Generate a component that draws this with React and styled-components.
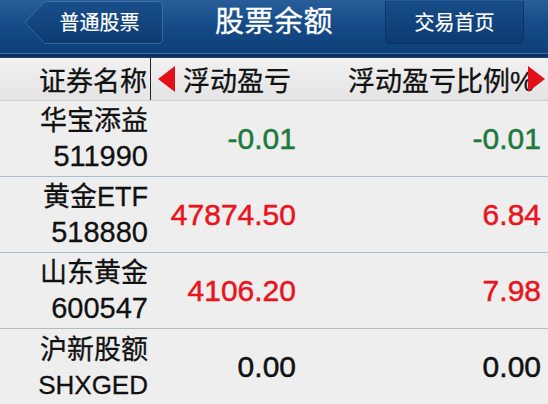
import React from 'react';
import styled, { createGlobalStyle } from 'styled-components';

const GlobalStyle = createGlobalStyle`
  html, body {
    margin: 0;
    padding: 0;
    background: #eeeeee;
  }
  body {
    width: 548px;
    height: 404px;
    overflow: hidden;
    font-family: "Liberation Sans", "Noto Sans CJK SC", sans-serif;
  }
`;

const Page = styled.div`
  width: 548px;
  height: 404px;
  display: flex;
  flex-direction: column;
  background: #eeeeee;
`;

const NavBar = styled.div`
  height: 53px;
  flex-shrink: 0;
  display: grid;
  grid-template-columns: 1fr auto 1fr;
  align-items: start;
  background: linear-gradient(#285d98, #164c89 45%, #0e3f78);
  border-bottom: 1px solid #3d6fa6;
  box-shadow: 0 1px 0 #0b2f5c, 0 2px 0 #0b2f5c, 0 3px 0 #0d3566, 0 4px 0 #1b3f66;
  margin-bottom: 4px;
  color: #fff;
`;

const Title = styled.div`
  font-size: 29px;
  line-height: 44px;
  letter-spacing: 0.5px;
  -webkit-text-stroke: 0.3px #fff;
`;

const NavButton = styled.button`
  position: relative;
  margin-top: 1px;
  height: 43px;
  width: 139px;
  border: none;
  padding: 0;
  background: none;
  color: #fff;
  font-family: inherit;
  font-size: 20px;
  cursor: pointer;
  justify-self: ${p => (p.$right ? 'end' : 'start')};
  margin-left: ${p => (p.$right ? '0' : '24px')};
  margin-right: ${p => (p.$right ? '24px' : '0')};

  svg {
    position: absolute;
    inset: 0;
  }

  span {
    position: relative;
    display: block;
    padding-left: ${p => (p.$right ? '0' : '12px')};
    line-height: 40px;
    -webkit-text-stroke: 0.2px #fff;
  }
`;

const BackShape = () => (
  <svg width="139" height="43" viewBox="0 0 139 43">
    <defs>
      <linearGradient id="bg1" x1="0" y1="0" x2="0" y2="1">
        <stop offset="0" stopColor="#1a4f8b" />
        <stop offset="1" stopColor="#0c3a73" />
      </linearGradient>
    </defs>
    <path
      d="M21 0.5 H134 Q138.5 0.5 138.5 5 V38 Q138.5 42.5 134 42.5 H21 L0.8 21.5 Z"
      fill="url(#bg1)"
      stroke="#5a86b8"
      strokeOpacity="0.55"
      strokeWidth="1"
    />
  </svg>
);

const HomeShape = () => (
  <svg width="139" height="43" viewBox="0 0 139 43">
    <defs>
      <linearGradient id="bg2" x1="0" y1="0" x2="0" y2="1">
        <stop offset="0" stopColor="#1a4f8b" />
        <stop offset="1" stopColor="#0c3a73" />
      </linearGradient>
    </defs>
    <rect
      x="0.5"
      y="-4"
      width="138"
      height="46.5"
      rx="5"
      fill="url(#bg2)"
      stroke="#0a2e5c"
      strokeOpacity="0.8"
      strokeWidth="1"
    />
  </svg>
);

const HeaderRow = styled.div`
  height: 42px;
  flex-shrink: 0;
  display: grid;
  grid-template-columns: 151px 146px 1fr;
  align-items: center;
  background: linear-gradient(#f1f1f1, #e4e4e4);
  border-bottom: 1px solid #c9d0d8;
  color: #111;
  font-size: 27px;
  overflow: hidden;
  -webkit-text-stroke: 0.3px #111;
`;

const HeadName = styled.div`
  height: 100%;
  display: flex;
  align-items: center;
  justify-content: flex-end;
  padding-right: 3px;
  border-right: 1.5px solid #222;
  box-sizing: border-box;
`;

const HeadCell = styled.div`
  display: flex;
  align-items: center;
  justify-content: ${p => (p.$end ? 'flex-end' : 'flex-start')};
  white-space: nowrap;
  gap: ${p => (p.$end ? '0' : '8px')};
  padding-left: ${p => (p.$end ? '0' : '7px')};
  padding-right: ${p => (p.$end ? '3px' : '0')};
`;

const Arrow = styled.span`
  width: 0;
  height: 0;
  flex-shrink: 0;
  border-top: 13px solid transparent;
  border-bottom: 13px solid transparent;
  -webkit-text-stroke: 0;
  ${p =>
    p.$dir === 'left'
      ? 'border-right: 17px solid #e3101a;'
      : 'border-left: 17px solid #e3101a; margin-left: -6px;'}
`;

const Row = styled.div`
  height: 76px;
  flex-shrink: 0;
  display: grid;
  grid-template-columns: 148px 148px 1fr;
  align-items: center;
  border-bottom: 1px solid #a9bdd0;
  box-sizing: border-box;
`;

const NameCell = styled.div`
  text-align: right;
  font-size: 27px;
  line-height: 35px;
  color: #111;
  padding-top: 2px;
  -webkit-text-stroke: 0.3px #111;
`;

const Code = styled.span`
  font-size: ${p => (p.$numeric ? '29px' : '26px')};
`;

const Value = styled.div`
  text-align: right;
  font-size: 30px;
  padding-right: ${p => (p.$last ? '7px' : '0')};
  color: ${p => (p.$tone === 'up' ? '#e8141e' : p.$tone === 'down' ? '#1d7a3c' : '#111')};
  -webkit-text-stroke: 0.5px currentColor;
`;

const rows = [
  { name: '华宝添益', code: '511990', pl: '-0.01', pct: '-0.01', tone: 'down' },
  { name: '黄金ETF', code: '518880', pl: '47874.50', pct: '6.84', tone: 'up' },
  { name: '山东黄金', code: '600547', pl: '4106.20', pct: '7.98', tone: 'up' },
  { name: '沪新股额', code: 'SHXGED', pl: '0.00', pct: '0.00', tone: 'flat' },
];

export default function App() {
  return (
    <>
      <GlobalStyle />
      <Page>
        <NavBar>
          <NavButton>
            <BackShape />
            <span>普通股票</span>
          </NavButton>
          <Title>股票余额</Title>
          <NavButton $right>
            <HomeShape />
            <span>交易首页</span>
          </NavButton>
        </NavBar>
        <HeaderRow>
          <HeadName>证券名称</HeadName>
          <HeadCell>
            <Arrow $dir="left" />
            浮动盈亏
          </HeadCell>
          <HeadCell $end>
            浮动盈亏比例%
            <Arrow $dir="right" />
          </HeadCell>
        </HeaderRow>
        {rows.map(r => (
          <Row key={r.code}>
            <NameCell>
              {r.name}
              <br />
              <Code $numeric={/^\d+$/.test(r.code)}>{r.code}</Code>
            </NameCell>
            <Value $tone={r.tone}>{r.pl}</Value>
            <Value $tone={r.tone} $last>
              {r.pct}
            </Value>
          </Row>
        ))}
      </Page>
    </>
  );
}
